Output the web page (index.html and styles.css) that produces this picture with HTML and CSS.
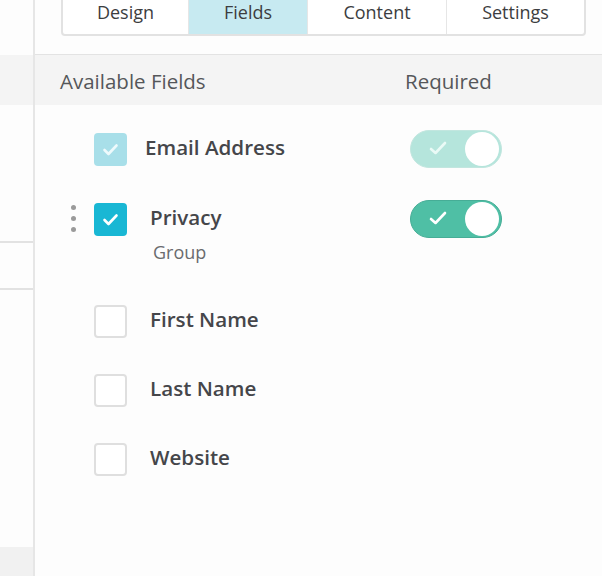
FILE: index.html
```html
<!DOCTYPE html>
<html>
<head>
<meta charset="utf-8">
<link rel="stylesheet" href="styles.css">
</head>
<body>
<div class="app">
  <aside class="sidebar">
    <div class="sb-top"></div>
    <div class="sb-head"></div>
    <div class="sb-gap1"></div>
    <div class="sb-field"></div>
    <div class="sb-fill"></div>
    <div class="sb-bottom"></div>
  </aside>
  <main class="main">
    <div class="tabbar">
      <nav class="tabs">
        <div class="tab tab-design">Design</div>
        <div class="tab tab-fields active">Fields</div>
        <div class="tab tab-content">Content</div>
        <div class="tab tab-settings">Settings</div>
      </nav>
    </div>
    <div class="head">
      <span class="head-available">Available Fields</span>
      <span class="head-required">Required</span>
    </div>
    <div class="rows">
      <div class="row row-email">
        <span class="check check-faded">
          <svg viewBox="0 0 33 33" width="33" height="33"><polyline points="10.5,17 14.5,21 22.5,12.5" fill="none" stroke="#eefafc" stroke-width="2.6" stroke-linecap="round" stroke-linejoin="round"/></svg>
        </span>
        <span class="label label-email">Email Address</span>
        <span class="toggle toggle-faded">
          <svg class="tick" viewBox="0 0 20 16" width="20" height="16"><polyline points="3,9 7.5,13 17,3" fill="none" stroke="#eafaf6" stroke-width="2.6" stroke-linecap="round" stroke-linejoin="round"/></svg>
          <span class="knob"></span>
        </span>
      </div>
      <div class="row row-privacy">
        <span class="drag"><i></i><i></i><i></i></span>
        <span class="check check-on">
          <svg viewBox="0 0 33 33" width="33" height="33"><polyline points="10.5,17 14.5,21 22.5,12.5" fill="none" stroke="#ffffff" stroke-width="2.6" stroke-linecap="round" stroke-linejoin="round"/></svg>
        </span>
        <span class="label-group">
          <span class="label">Privacy</span>
          <span class="sublabel">Group</span>
        </span>
        <span class="toggle toggle-on">
          <svg class="tick" viewBox="0 0 20 16" width="20" height="16"><polyline points="3,9 7.5,13 17,3" fill="none" stroke="#ffffff" stroke-width="2.6" stroke-linecap="round" stroke-linejoin="round"/></svg>
          <span class="knob"></span>
        </span>
      </div>
      <div class="row">
        <span class="check check-off"></span>
        <span class="label">First Name</span>
      </div>
      <div class="row">
        <span class="check check-off"></span>
        <span class="label">Last Name</span>
      </div>
      <div class="row">
        <span class="check check-off"></span>
        <span class="label">Website</span>
      </div>
    </div>
  </main>
</div>
</body>
</html>
```

FILE: styles.css
```css
* { box-sizing: border-box; }
html, body {
  margin: 0;
  padding: 0;
  height: 100%;
  background: #fdfdfd;
  font-family: "Open Sans", "Noto Sans", sans-serif;
  color: #3f4043;
  overflow: hidden;
}
.app {
  display: flex;
  height: 576px;
}
.sidebar {
  width: 35px;
  flex: none;
  display: flex;
  flex-direction: column;
  border-right: 2px solid #e6e6e6;
  background: #fdfdfd;
}
.sb-top { height: 55px; background: #fdfdfd; }
.sb-head { height: 50px; background: #f4f4f4; }
.sb-gap1 { height: 136px; }
.sb-field {
  height: 49px;
  border-top: 2px solid #e2e2e2;
  border-bottom: 2px solid #e2e2e2;
}
.sb-fill { flex: 1; }
.sb-bottom { height: 29px; background: #f1f1f1; }

.main {
  flex: 1;
  display: flex;
  flex-direction: column;
  background: #fdfdfd;
}
.tabbar {
  height: 55px;
  border-bottom: 1px solid #e3e3e3;
  padding-left: 26px;
  background: #fdfdfd;
}
.tabs {
  display: flex;
  width: 525px;
  height: 46px;
  margin-top: -10px;
  border: 2px solid #e2e2e2;
  border-radius: 4px;
  background: #ffffff;
  overflow: hidden;
}
.tab {
  display: flex;
  align-items: center;
  justify-content: center;
  padding-bottom: 3px;
  font-size: 18px;
  color: #3c3d40;
  border-right: 1px solid #e6e6e6;
}
.tab:last-child { border-right: none; }
.tab-design { width: 126px; }
.tab-fields { width: 119px; }
.tab-content { width: 139px; }
.tab-settings { flex: 1; }
.tab.active { background: #c7eaf1; }

.head {
  height: 50px;
  background: #f4f4f4;
  display: flex;
  align-items: center;
  padding-left: 25px;
  padding-top: 2px;
  font-size: 20.5px;
  color: #55575a;
}
.head-available { width: 345px; }

.rows {
  display: flex;
  flex-direction: column;
  padding-top: 28px;
}
.row {
  display: flex;
  align-items: flex-start;
  height: 69px;
  padding-left: 59px;
  padding-right: 100px;
  position: relative;
}
.row-email { height: 70px; }
.row-privacy { height: 102px; }

.check {
  width: 33px;
  height: 33px;
  flex: none;
  border-radius: 4px;
  display: block;
}
.check svg { display: block; }
.check-faded { background: #a8dfe9; }
.check-on { background: #19b7d4; }
.check-off {
  border: 2px solid #dfdfdf;
  background: #fff;
}

.label {
  font-size: 20.6px;
  font-weight: 600;
  color: #45464a;
  line-height: 29px;
  margin-left: 23px;
  display: block;
}
.label-email { margin-left: 18px; }
.label-group {
  display: flex;
  flex-direction: column;
}
.sublabel {
  font-size: 18px;
  font-weight: 400;
  color: #6a6b6e;
  margin-left: 26px;
  line-height: 24px;
  margin-top: 8px;
}

.drag {
  position: absolute;
  left: 36px;
  top: 2px;
  display: flex;
  flex-direction: column;
  gap: 6px;
}
.drag i {
  display: block;
  width: 5px;
  height: 5px;
  border-radius: 50%;
  background: #9a9a9a;
}

.toggle {
  width: 92px;
  height: 38px;
  border-radius: 19px;
  margin-top: -3px;
  margin-left: auto;
  display: flex;
  align-items: center;
  justify-content: space-between;
  padding: 0 2px 0 17px;
  flex: none;
}
.toggle-faded { background: #b5e5dc; border: 1px solid #c2e6df; }
.toggle-on { background: #4fbfa5; border: 1px solid #46ad96; }
.tick { display: block; margin-top: -2px; }
.knob {
  width: 34px;
  height: 34px;
  border-radius: 50%;
  background: #ffffff;
}
```
